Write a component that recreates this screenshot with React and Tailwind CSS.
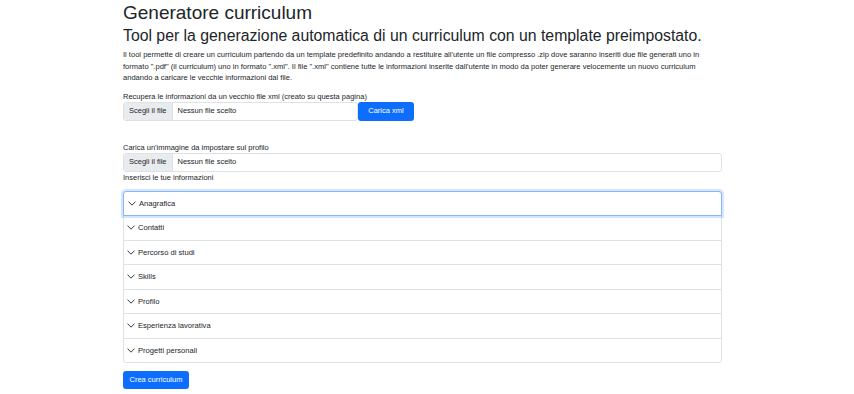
import React from 'react'

const sections = [
  'Anagrafica',
  'Contatti',
  'Percorso di studi',
  'Skills',
  'Profilo',
  'Esperienza lavorativa',
  'Progetti personali',
]

function Chevron() {
  return (
    <svg width="8" height="5" viewBox="0 0 8 5" className="shrink-0">
      <polyline points="0.5,0.6 4,4.2 7.5,0.6" fill="none" stroke="#212529" strokeWidth="0.9" />
    </svg>
  )
}

function FileInput({ width }) {
  return (
    <div className={`flex h-[19px] items-center rounded-[3px] border border-[#dee2e6] bg-white text-[7.5px] text-[#212529] ${width}`}>
      <div className="flex h-full items-center rounded-l-[3px] border-r border-[#dee2e6] bg-[#e9ecef] px-[5px]">Scegli il file</div>
      <div className="px-[5px]">Nessun file scelto</div>
    </div>
  )
}

export default function App() {
  return (
    <div className="min-h-screen bg-white font-['Liberation_Sans',Arial,sans-serif] text-[#212529]">
      <div className="ml-[123px] w-[599px]">
        {/* Header */}
        <h1 className="pt-[1px] text-[19px] leading-[24px]">Generatore curriculum</h1>
        <h3 className="text-[15.8px] leading-[22px] whitespace-nowrap">
          Tool per la generazione automatica di un curriculum con un template preimpostato.
        </h3>
        <p className="mt-[2px] w-[580px] text-[7.55px] leading-[11.5px]">
          Il tool permette di creare un curriculum partendo da un template predefinito andando a restituire all'utente un file compresso .zip dove saranno inseriti due file generati uno in formato ".pdf" (il curriculum) uno in formato ".xml". Il file ".xml" contiene tutte le informazioni inserite dall'utente in modo da poter generare velocemente un nuovo curriculum andando a caricare le vecchie informazioni dal file.
        </p>

        {/* Recupera xml */}
        <div className="mt-[7px] text-[7.5px] leading-[11px]">Recupera le informazioni da un vecchio file xml (creato su questa pagina)</div>
        <div className="flex items-center">
          <FileInput width="w-[235px]" />
          <button className="h-[19px] w-[56px] rounded-[3px] bg-[#0d6efd] text-[7.5px] text-white">Carica xml</button>
        </div>

        {/* Immagine profilo */}
        <div className="mt-[21px] text-[7.5px] leading-[11px]">Carica un'immagine da impostare sul profilo</div>
        <FileInput width="w-full" />
        <div className="text-[7.5px] leading-[11px]">Inserisci le tue informazioni</div>

        {/* Accordion */}
        <div className="mt-[8px] rounded-[3px] border border-[#dee2e6]">
          {sections.map((s, i) => (
            <div
              key={s}
              className={
                i === 0
                  ? 'relative -m-px flex h-[25.5px] items-center gap-[3px] rounded-t-[3px] border border-[#86b7fe] px-[4px] text-[7.6px] shadow-[0_0_0_2px_rgba(13,110,253,0.18)]'
                  : 'flex h-[24.5px] items-center gap-[3px] border-t border-[#dee2e6] px-[3px] text-[7.6px]'
              }
            >
              <Chevron />
              <span>{s}</span>
            </div>
          ))}
        </div>

        <button className="mt-[8px] h-[18px] w-[66px] rounded-[3px] bg-[#0d6efd] text-[7.5px] text-white">Crea curriculum</button>
      </div>
    </div>
  )
}
